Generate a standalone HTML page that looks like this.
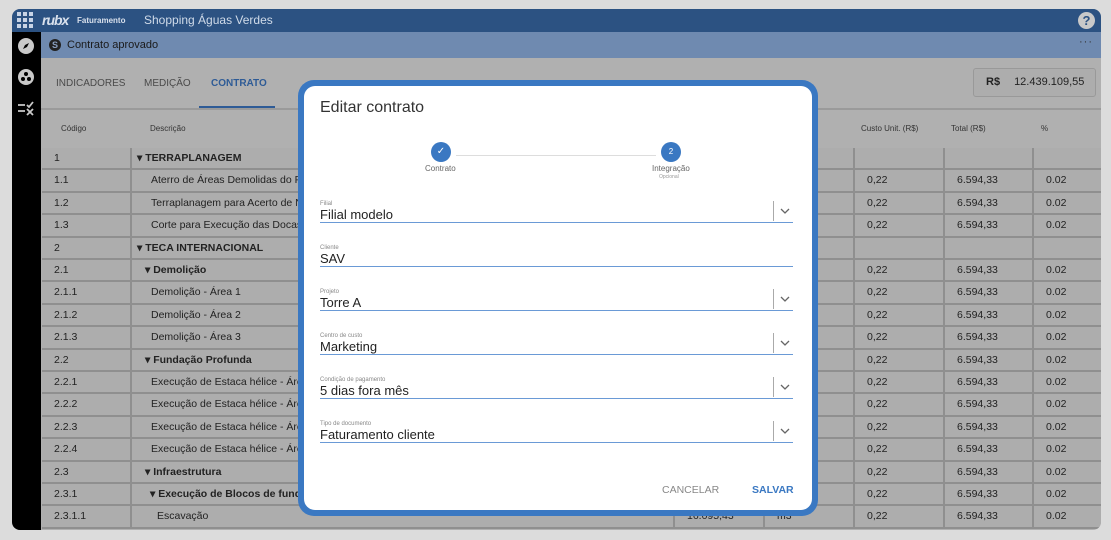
<!DOCTYPE html>
<html><head><meta charset="utf-8"><style>
*{margin:0;padding:0;box-sizing:border-box}
body{width:1111px;height:540px;overflow:hidden;background:#dcdcdc;font-family:"Liberation Sans",sans-serif;position:relative}
.scr{position:absolute;left:12px;top:9px;width:1089px;height:521px;border-radius:8px;overflow:hidden;background:#b0b0b0}
.top{position:absolute;left:0;top:0;width:100%;height:23px;background:#2c5282;color:#d0dbe9}
.side{position:absolute;left:0;top:23px;width:29px;height:498px;background:#000}
.bar2{position:absolute;left:29px;top:23px;right:0;height:26px;background:#6f8ab0}
.tabs{position:absolute;left:29px;top:49px;right:0;height:52px;background:#b0b0b0;border-bottom:2px solid #9a9a9a}
.tab{position:absolute;top:20px;font-size:10px;color:#4a4a4a}
.abs{position:absolute}
.row{position:absolute;left:30px;height:22.4px;width:1060px;font-size:10.5px;color:#222}
.c{position:absolute;top:0;height:100%;border-right:2px solid #8f8f8f;border-bottom:2px solid #8f8f8f;background:#adadad;padding-left:12px;line-height:21px;white-space:nowrap;overflow:hidden}
.modal{position:absolute;left:298px;top:80px;width:520px;height:436px;background:#3a78c2;border-radius:16px;padding:6px}
.mi{width:100%;height:100%;background:#fff;border-radius:11px;position:relative}
.fld{position:absolute;left:16px;width:473px;height:24px;border-bottom:1.5px solid #6a9ad6}
.lb{position:absolute;top:2px;left:0;font-size:6px;color:#888}
.val{position:absolute;top:8px;left:0;font-size:13px;color:#222}
.dd{position:absolute;right:0;top:2px;width:20px;height:20px;border-left:1.5px solid #aaa}
</style></head><body>
<div class="scr">
 <div class="top">
  <svg class="abs" style="left:5px;top:3px" width="16" height="16" viewBox="0 0 16 16" fill="#c8d4e6"><rect x="0" y="0" width="4" height="4"/><rect x="6" y="0" width="4" height="4"/><rect x="12" y="0" width="4" height="4"/><rect x="0" y="6" width="4" height="4"/><rect x="6" y="6" width="4" height="4"/><rect x="12" y="6" width="4" height="4"/><rect x="0" y="12" width="4" height="4"/><rect x="6" y="12" width="4" height="4"/><rect x="12" y="12" width="4" height="4"/></svg>
  <div class="abs" style="left:30px;top:3px;font-size:14px;font-weight:bold;font-style:italic;color:#d8e0ec;letter-spacing:-1px">rubx</div>
  <div class="abs" style="left:65px;top:7px;font-size:8px;font-weight:bold;color:#d8e0ec">Faturamento</div>
  <div class="abs" style="left:132px;top:4px;font-size:12px;color:#d0dbe9">Shopping Águas Verdes</div>
  <div class="abs" style="left:1066px;top:3px;width:17px;height:17px;border-radius:50%;background:#c9c9c9;color:#2c5282;font-size:13px;font-weight:bold;text-align:center;line-height:17px">?</div>
 </div>
 <div class="side">
  <svg class="abs" style="left:6px;top:6px" width="16" height="16" viewBox="0 0 16 16"><circle cx="8" cy="8" r="8" fill="#c9c9c9"/><path d="M11 5L9 9 5 11 7 7z" fill="#000"/></svg>
  <svg class="abs" style="left:6px;top:37px" width="16" height="16" viewBox="0 0 16 16"><circle cx="8" cy="8" r="8" fill="#c9c9c9"/><circle cx="8" cy="5" r="2" fill="#000"/><circle cx="5" cy="10" r="2" fill="#000"/><circle cx="11" cy="10" r="2" fill="#000"/></svg>
  <svg class="abs" style="left:5px;top:68px" width="18" height="16" viewBox="0 0 18 16"><path d="M1 5h7M1 11h7M10 5l2 2 4-5M10 9l6 6M16 9l-6 6" stroke="#c9c9c9" stroke-width="1.8" fill="none"/></svg>
 </div>
 <div class="bar2">
  <div class="abs" style="left:8px;top:7px;width:12px;height:12px;border-radius:50%;background:#222;color:#8aa0c0;font-size:9px;font-weight:bold;text-align:center;line-height:12px">S</div>
  <div class="abs" style="left:26px;top:7px;font-size:11px;color:#1a1a1a">Contrato aprovado</div>
  <div class="abs" style="right:8px;top:4px;font-size:11px;color:#333;letter-spacing:1px">···</div>
 </div>
 <div class="tabs">
  <div class="tab" style="left:15px">INDICADORES</div>
  <div class="tab" style="left:103px">MEDIÇÃO</div>
  <div class="tab" style="left:170px;color:#2e5b96;font-weight:bold">CONTRATO</div>
  <div class="abs" style="left:158px;top:48px;width:76px;height:2px;background:#2e5b96"></div>
  <div class="abs" style="left:932px;top:10px;width:123px;height:29px;border:1px solid #999;border-radius:3px;background:#adadad;font-size:11px;color:#222;line-height:27px"><b style="margin-left:12px">R$</b><span style="margin-left:14px">12.439.109,55</span></div>
 </div>
 <div class="abs" style="left:29px;top:103px;right:0;height:35px;font-size:8px;color:#333">
  <span class="abs" style="left:20px;top:12px">Código</span><span class="abs" style="left:109px;top:12px">Descrição</span>
  <span class="abs" style="left:820px;top:12px">Custo Unit. (R$)</span><span class="abs" style="left:910px;top:12px">Total (R$)</span><span class="abs" style="left:1000px;top:12px">%</span>
 </div>
 <div id="rows"></div>
</div>
<div class="modal"><div class="mi">
 <div class="abs" style="left:16px;top:13px;font-size:16px;color:#333">Editar contrato</div>
 <div class="abs" style="left:152px;top:69px;width:200px;height:1px;background:#ddd"></div>
 <div class="abs" style="left:127px;top:56px;width:20px;height:20px;border-radius:50%;background:#3a78c2;color:#fff;font-size:10px;text-align:center;line-height:20px">✓</div>
 <div class="abs" style="left:121px;top:78px;font-size:8px;color:#666">Contrato</div>
 <div class="abs" style="left:357px;top:56px;width:20px;height:20px;border-radius:50%;background:#3a78c2;color:#fff;font-size:8px;text-align:center;line-height:20px">2</div>
 <div class="abs" style="left:348px;top:78px;font-size:8px;color:#666">Integração</div>
 <div class="abs" style="left:355px;top:88px;font-size:5px;color:#999">Opcional</div>
 <div id="f"></div>
 <div class="abs" style="left:358px;top:398px;font-size:10.5px;color:#888">CANCELAR</div>
 <div class="abs" style="left:448px;top:398px;font-size:10.5px;color:#3a78c2;font-weight:bold">SALVAR</div>
</div></div>
<script>
var R=[["1","▾ TERRAPLANAGEM",1,0],["1.1","Aterro de Áreas Demolidas do Pátio",0,1],["1.2","Terraplanagem para Acerto de Nível",0,1],["1.3","Corte para Execução das Docas",0,1],["2","▾ TECA INTERNACIONAL",1,0],["2.1","▾ Demolição",2,1],["2.1.1","Demolição - Área 1",0,2],["2.1.2","Demolição - Área 2",0,2],["2.1.3","Demolição - Área 3",0,2],["2.2","▾ Fundação Profunda",2,1],["2.2.1","Execução de Estaca hélice - Área",0,2],["2.2.2","Execução de Estaca hélice - Área",0,2],["2.2.3","Execução de Estaca hélice - Área",0,2],["2.2.4","Execução de Estaca hélice - Área",0,2],["2.3","▾ Infraestrutura",2,1],["2.3.1","▾ Execução de Blocos de fundação",2,2],["2.3.1.1","Escavação",0,3]];
var h="";R.forEach(function(r,i){var y=139+i*22.4;var ind;if(r[2])ind=r[3]==0?0:r[3]==1?8:13;else ind=r[3]==3?20:14;var e=r[2]==1;
h+='<div class="row" style="top:'+y+'px"><div class="c" style="left:0;width:90px">'+r[0]+'</div><div class="c" style="left:90px;width:543px;padding-left:'+(5+ind)+'px;'+(r[2]?'font-weight:bold':'')+'">'+r[1]+'</div><div class="c" style="left:633px;width:90px">'+(i==16?'16.095,43':'')+'</div><div class="c" style="left:723px;width:90px">'+(i==16?'m3':'')+'</div><div class="c" style="left:813px;width:90px">'+(e?'':'0,22')+'</div><div class="c" style="left:903px;width:89px">'+(e?'':'6.594,33')+'</div><div class="c" style="left:992px;width:70px;border-right:none">'+(e?'':'0.02')+'</div></div>';});
document.getElementById("rows").innerHTML=h;
var F=[["Filial","Filial modelo",1],["Cliente","SAV",0],["Projeto","Torre A",1],["Centro de custo","Marketing",1],["Condição de pagamento","5 dias fora mês",1],["Tipo de documento","Faturamento cliente",1]];
var g="";F.forEach(function(f,i){var y=113+i*44;g+='<div class="fld" style="top:'+y+'px"><div class="lb">'+f[0]+'</div><div class="val">'+f[1]+'</div>'+(f[2]?'<div class="dd"><svg width="18" height="18" viewBox="0 0 18 18" style="position:absolute;left:2px;top:1px"><path d="M5 7l4 4 4-4" fill="none" stroke="#666" stroke-width="1.3"/></svg></div>':'')+'</div>';});
document.getElementById("f").innerHTML=g;
</script>
</body></html>
